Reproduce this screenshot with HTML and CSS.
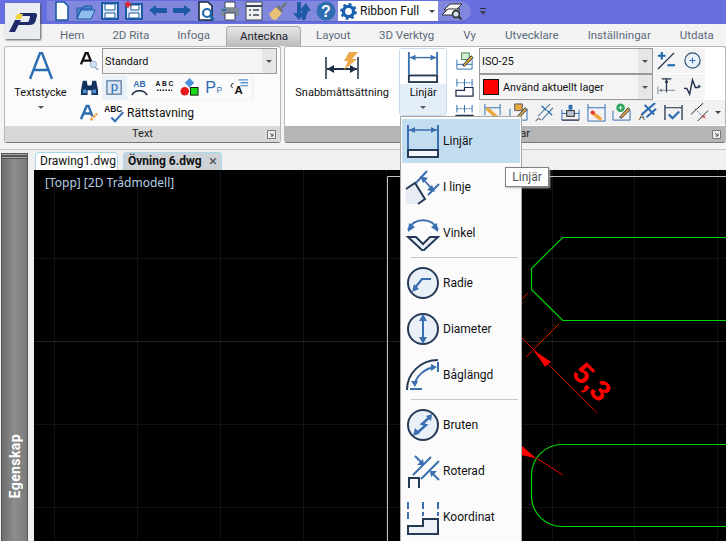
FILE: index.html
```html
<!DOCTYPE html>
<html lang="en">
<head>
    <meta charset="UTF-8">
    <title>Anteckna - Ribbon</title>
    <link rel="stylesheet" href="styles.css">
</head>
<body>
<div class="app">

    <!-- Title bar with quick access -->
    <div class="titlebar">
        <div class="qat">
            <span class="qbtn"><svg viewBox="0 0 20 20"><path d="M4 1h8l4 4v14H4z" fill="#fff" stroke="#1c5aa6" stroke-width="1.6"/></svg></span>
            <span class="qbtn"><svg viewBox="0 0 20 20"><path d="M1 18V7h6l1-2h8v3H5z" fill="#4a86cc" stroke="#1c5aa6"/><path d="M1 18l4-9h14l-4 9z" fill="#8fbdec" stroke="#1c5aa6"/></svg></span>
            <span class="qbtn"><svg viewBox="0 0 20 20"><path d="M2 2h16v16H2z" fill="#dbe8f6" stroke="#1c5aa6" stroke-width="2"/><path d="M5 3h10v6H5zM5 12h10v5H5z" fill="#fff" stroke="#1c5aa6"/></svg></span>
            <span class="qbtn"><svg viewBox="0 0 20 20"><path d="M2 3h16v15H2z" fill="#dbe8f6" stroke="#1c5aa6" stroke-width="2"/><path d="M7 4h8v5H7zM5 12h10v5H5z" fill="#fff" stroke="#1c5aa6"/><path d="M4 0v7M1 2l6 3M7 2L1 5" stroke="#e8222a" stroke-width="1.5"/></svg></span>
            <span class="qbtn"><svg viewBox="0 0 20 20"><path d="M1 9l7-5v3h11v5H8v3z" fill="#1c5aa6"/></svg></span>
            <span class="qbtn"><svg viewBox="0 0 20 20"><path d="M19 9l-7-5v3H1v5h11v3z" fill="#1c5aa6"/></svg></span>
            <span class="qbtn"><svg viewBox="0 0 20 20"><path d="M3 1h9l4 4v14H3z" fill="#fff" stroke="#1a2a44" stroke-width="1.6"/><circle cx="11" cy="12" r="4" fill="#fff" stroke="#1c6ab0" stroke-width="2.2"/><path d="M14 15l4 4" stroke="#1c6ab0" stroke-width="2.6"/></svg></span>
            <span class="qbtn"><svg viewBox="0 0 20 20"><path d="M5 1h10v6H5z" fill="#fff" stroke="#3a4658"/><path d="M1 7h18v8H1z" fill="#7d8a9c"/><path d="M5 12h10v7H5z" fill="#fff" stroke="#3a4658"/><path d="M2 9h4" stroke="#2c6fb8" stroke-width="2"/></svg></span>
            <span class="qbtn"><svg viewBox="0 0 20 20"><path d="M2 1h16v18H2z" fill="#f2f2f2" stroke="#3a4658"/><path d="M2 5h16" stroke="#3a4658" stroke-width="2"/><path d="M5 9h2M5 14h2M9 9h6M9 14h6" stroke="#3a4658" stroke-width="1.6"/></svg></span>
            <span class="qbtn"><svg viewBox="0 0 20 20"><path d="M1 13l7-7 6 6-6 7-4-1z" fill="#e8c078"/><path d="M8 6l3-2 4 4-1 4z" fill="#70757c"/><path d="M13 5l5-4 1 2-4 4z" fill="#70757c"/></svg></span>
            <span class="qbtn"><svg viewBox="0 0 20 20"><path d="M5 1h4v11h4l-6 7-6-7h4z" fill="#1c5aa6"/><path d="M14 19h-3v-9H8l7-8 5 8h-3z" fill="#1c5aa6" transform="translate(-1 0)"/></svg></span>
            <span class="qbtn"><svg viewBox="0 0 20 20"><circle cx="10" cy="10" r="9.5" fill="#2d6db0"/><text x="10" y="15.5" class="help-mark">?</text></svg></span>
            <div class="ws-combo">
                <svg class="gear" viewBox="0 0 20 20"><circle cx="10" cy="10" r="6" fill="none" stroke="#1c62b0" stroke-width="4"/><circle cx="10" cy="10" r="8.4" fill="none" stroke="#1c62b0" stroke-width="3" stroke-dasharray="3.2 3.4"/></svg>
                <span class="ws-name">Ribbon Full</span>
                <span class="caret dark"></span>
            </div>
            <span class="qbtn layers"><svg viewBox="0 0 24 20"><path d="M3 9l6-6h12l-6 6z" fill="#f4f4f4" stroke="#333"/><path d="M1 14l6-6h12l-6 6z" fill="#fff" stroke="#333"/><circle cx="15" cy="13" r="3.4" fill="#cfe0f2" stroke="#333" stroke-width="1.6"/><path d="M17.5 15.5l3 3" stroke="#333" stroke-width="2"/></svg></span>
        </div>
        <span class="qat-more"></span>
    </div>

    <div class="logo">
        <svg viewBox="0 0 35 36">
            <path d="M4 29l6-12h6l-6 12z" fill="#1f2a6b"/>
            <path d="M15 10h14c3 0 3.500 1.500 2.700 4l-1.200 4c-1 3-3 4-6 4H13l1.500-3h7.500c1 0 1.700-.5 2-1.500l1-3c.3-1-.2-1.500-1.300-1.500H15z" fill="#1f2a6b"/>
            <path d="M12 11h6l-2 5h-6z" fill="#f0d838"/>
        </svg>
    </div>

    <!-- Ribbon tabs -->
    <div class="tabs">
        <span class="tab">Hem</span>
        <span class="tab">2D Rita</span>
        <span class="tab">Infoga</span>
        <span class="tab active">Anteckna</span>
        <span class="tab">Layout</span>
        <span class="tab wide">3D Verktyg</span>
        <span class="tab wide">Vy</span>
        <span class="tab wide">Utvecklare</span>
        <span class="tab wide">Inställningar</span>
        <span class="tab wide">Utdata</span>
    </div>

    <!-- Ribbon panels -->
    <div class="ribbon">
        <section class="panel panel-text">
            <div class="panel-body">
                <div class="big-btn text-btn">
                    <svg class="big-a" viewBox="0 0 24 28"><path d="M1 27L11 1h2l10 26M5.500 18h13" fill="none" stroke="#2a6db5" stroke-width="2.400"/></svg>
                    <span class="big-label">Textstycke</span>
                    <span class="caret"></span>
                </div>
                <div class="icon-col">
                    <span class="cell"><svg viewBox="0 0 20 20"><path d="M1 13L6 1h2l5 12M3 9h8" fill="none" stroke="#111" stroke-width="2.400"/><circle cx="14" cy="13" r="3.500" fill="#cfe0f2" stroke="#9bb4d0"/><path d="M16 16l3 3" stroke="#9aa6b4" stroke-width="1.500"/></svg></span>
                    <span class="cell"><svg viewBox="0 0 20 20"><path d="M3 3h4l1 5h4l1-5h4l2 10v5h-7v-5H8v5H1v-5z" fill="#12305c"/><path d="M3 12h4v4H3zM13 12h4v4h-4z" fill="#4f8fd0"/></svg></span>
                    <span class="cell"><svg viewBox="0 0 20 20"><path d="M1 16L7 2h2l4 11M4 10h7" fill="none" stroke="#2f6cb2" stroke-width="2.600"/><path d="M11 17l7-7" stroke="#eda13a" stroke-width="2.600" stroke-dasharray="3 1"/></svg></span>
                </div>
                <div class="stack">
                    <div class="combo combo-text">
                        <span class="combo-value">Standard</span>
                        <span class="combo-arrow"><span class="caret"></span></span>
                    </div>
                    <div class="icon-row row-text">
                        <span class="cell on"><svg viewBox="0 0 20 20"><rect x="2" y="3" width="15" height="14" fill="#d8e6f6" stroke="#34557e"/><text x="10" y="14" class="ico-text blue" font-size="14">p</text></svg></span>
                        <span class="cell"><svg viewBox="0 0 20 20"><text x="10" y="9" class="ico-text blue" font-size="9" font-weight="700">AB</text><path d="M2 18c3-6 13-6 16 0" fill="none" stroke="#1a2a44" stroke-width="1.500"/></svg></span>
                        <span class="cell"><svg viewBox="0 0 20 20"><text x="10" y="8" class="ico-text" font-size="7" font-weight="700">A B C</text><path d="M2 13h16" stroke="#111" stroke-width="1.600" stroke-dasharray="1.600 1.400"/></svg></span>
                        <span class="cell"><svg viewBox="0 0 20 20"><path d="M10 0l5 5-5 5-5-5z" fill="#4f93e0"/><circle cx="5" cy="14" r="4.500" fill="#e8181c"/><rect x="11" y="10" width="8" height="8" fill="#18d818" stroke="#111"/></svg></span>
                        <span class="cell"><svg viewBox="0 0 20 20"><text x="6" y="16" class="ico-text blue" font-size="17">P</text><text x="15" y="16" class="ico-text blue" font-size="9">P</text></svg></span>
                        <span class="cell"><svg viewBox="0 0 20 20"><path d="M9 2h10M11 5h8M11 8h8" stroke="#5b93d2" stroke-width="1.400"/><text x="9" y="17" class="ico-text" font-size="12" font-weight="700">A</text><path d="M4 6H2l-1 3 2 1" fill="none" stroke="#333"/></svg></span>
                    </div>
                    <div class="spell">
                        <svg viewBox="0 0 24 20"><text x="10" y="9" class="ico-text" font-size="9" font-weight="700">ABC</text><path d="M8 15l4 4 9-10" fill="none" stroke="#2f6cb2" stroke-width="2.200"/></svg>
                        <span>Rättstavning</span>
                    </div>
                </div>
            </div>
            <div class="panel-foot">
                <span class="foot-title">Text</span>
                <svg class="launcher" viewBox="0 0 9 9"><path d="M.5.500h8v8h-8z" fill="#eee" stroke="#777"/><path d="M3 3l3 3M6 3.500V6H3.500" fill="none" stroke="#555"/></svg>
            </div>
        </section>

        <section class="panel panel-dim">
            <div class="panel-body">
                <div class="big-btn quick-btn">
                    <svg class="quick-icon" viewBox="0 0 36 30"><path d="M2 6v22M34 6v22" stroke="#1f2f4a" stroke-width="1.500"/><path d="M3 18h30" stroke="#1f2f4a" stroke-width="2"/><path d="M3 18l7-4v8zM33 18l-7-4v8z" fill="#1f2f4a"/><path d="M25 1h9l-6 7h5L20 19l4-9h-4z" fill="#eca94a"/></svg>
                    <span class="big-label">Snabbmåttsättning</span>
                </div>
                <div class="split-btn">
                    <div class="split-top">
                        <svg viewBox="0 0 36 34"><path d="M3 1v24M33 1v24" stroke="#3a6fb0" stroke-width="2"/><path d="M4 7h28" stroke="#3a6fb0" stroke-width="1.500"/><path d="M4 7l6-3v6zM32 7l-6-3v6z" fill="#3a6fb0"/><rect x="3" y="26" width="30" height="7" fill="#fff" stroke="#253a56" stroke-width="2"/></svg>
                    </div>
                    <div class="split-bottom">
                        <span class="big-label">Linjär</span>
                        <span class="caret"></span>
                    </div>
                </div>
                <div class="icon-col dim-col">
                    <span class="cell"><svg viewBox="0 0 20 20"><path d="M2 8v10M18 8v10M2 18h16" stroke="#2f6cb2"/><path d="M2 13h16" stroke="#2f6cb2"/><rect x="7" y="1" width="8" height="7" fill="#d8ecd8" stroke="#3a8a4a"/><path d="M8 14l9-10 2 2-9 9z" fill="#e8a83e" stroke="#234"/></svg></span>
                    <span class="cell"><svg viewBox="0 0 20 20"><path d="M2 1v8M10 1v8M18 1v8" stroke="#2f6cb2"/><path d="M2 5h16" stroke="#2f6cb2" stroke-dasharray="2 1"/><path d="M1 19v-6h9v-3h9v9z" fill="#fff" stroke="#1f2f4a" stroke-width="1.300"/></svg></span>
                    <span class="cell"><svg viewBox="0 0 20 20"><path d="M2 1v8M10 1v8M18 1v8" stroke="#2f6cb2"/><path d="M2 5h16" stroke="#2f6cb2" stroke-dasharray="2 1"/><path d="M1 12h18v6H1z" fill="#fff" stroke="#1f2f4a" stroke-width="1.300"/></svg></span>
                </div>
                <div class="stack dim-stack">
                    <div class="combo-line">
                        <div class="combo combo-dim">
                            <span class="combo-value">ISO-25</span>
                            <span class="combo-arrow"><span class="caret"></span></span>
                        </div>
                        <div class="pair">
                            <span class="cell"><svg viewBox="0 0 20 20"><path d="M1 19L18 2" stroke="#1f2f4a" stroke-width="1.300"/><path d="M1 5h8M5 1v8" stroke="#1f66b0" stroke-width="2.200"/><path d="M11 15h8" stroke="#1f66b0" stroke-width="2.200"/></svg></span>
                            <span class="cell"><svg viewBox="0 0 20 20"><circle cx="10" cy="10" r="8" fill="#eaf1f9" stroke="#34506f" stroke-width="1.300"/><path d="M7 10h6M10 7v6" stroke="#1f66b0"/></svg></span>
                        </div>
                    </div>
                    <div class="combo-line">
                        <div class="combo combo-dim">
                            <span class="swatch"></span>
                            <span class="combo-value">Använd aktuellt lager</span>
                            <span class="combo-arrow"><span class="caret"></span></span>
                        </div>
                        <div class="pair">
                            <span class="cell"><svg viewBox="0 0 20 20"><path d="M1 10v8M19 14H11M4 14h5" stroke="#7a8490"/><path d="M2 14l3-2v4z" fill="#7a8490"/><path d="M5 2h10M10 2v14" stroke="#1f2f4a" stroke-width="1.300"/><path d="M10 2l-2 4h4z" fill="#1f2f4a"/></svg></span>
                            <span class="cell"><svg viewBox="0 0 20 20"><path d="M1 12h3l3 6 3-15 3 8h3" fill="none" stroke="#1f2f4a" stroke-width="1.500"/><path d="M19 10l-3-2v4z" fill="#1f2f4a"/></svg></span>
                        </div>
                    </div>
                    <div class="icon-row row-dim">
                        <span class="cell"><svg viewBox="0 0 20 20"><path d="M2 1v12M18 1v12" stroke="#2f6cb2"/><path d="M2 5h16" stroke="#2f6cb2"/><path d="M5 4l11 10-2 3L3 7z" fill="#e8a83e"/><path d="M1 18h18" stroke="#1f2f4a"/></svg></span>
                        <span class="cell"><svg viewBox="0 0 20 20"><path d="M6 1h8v7H6z" fill="#e8a83e" stroke="#556"/><path d="M1 6v12M19 6v12M1 18h18" stroke="#2f6cb2"/><path d="M8 15l9-10 2 2-9 9z" fill="#e8a83e" stroke="#234"/></svg></span>
                        <span class="cell"><svg viewBox="0 0 20 20"><path d="M3 14L16 1M7 18L19 5" stroke="#5b7d9e" stroke-width="1.200"/><path d="M7 3l5 5M18 13l-5-5" stroke="#2f6cb2" stroke-width="1.500"/><path d="M1 19c1-3 4-3 5-1" fill="none" stroke="#222"/></svg></span>
                        <span class="cell"><svg viewBox="0 0 20 20"><path d="M1 7v11M19 7v11M1 11h18" stroke="#2f6cb2"/><rect x="6" y="8" width="8" height="6" fill="#bcc6d2" stroke="#222"/><rect x="8" y="2" width="4" height="5" fill="#2f6cb2"/><path d="M1 18h18" stroke="#1f2f4a" stroke-width="1.400"/></svg></span>
                        <span class="cell"><svg viewBox="0 0 20 20"><path d="M1 1v18M19 1v18M1 5h18M1 19h18" stroke="#2f6cb2" fill="none"/><path d="M7 9l9 7-2 3-9-7z" fill="#f0a23e"/><circle cx="6" cy="10" r="2.200" fill="#e83030"/></svg></span>
                        <span class="cell"><svg viewBox="0 0 20 20"><circle cx="9" cy="5" r="4.500" fill="#2aa55a"/><path d="M7 5h4M9 3v4" stroke="#fff"/><path d="M1 8v10M19 8v10M1 18h18" stroke="#2f6cb2"/><path d="M8 15l9-10 2 2-9 9z" fill="#e8a83e" stroke="#234"/></svg></span>
                        <span class="cell"><svg viewBox="0 0 20 20"><path d="M4 12L18 0M9 15l10-9" stroke="#2f6cb2" stroke-width="2.200"/><path d="M7 2l10 10" stroke="#2f6cb2" stroke-width="2.200"/><text x="4" y="18" class="ico-text" font-size="9">A</text></svg></span>
                        <span class="cell"><svg viewBox="0 0 20 20"><path d="M1 2v16M19 2v16M1 5h18" stroke="#1f2f4a" stroke-width="1.300"/><path d="M5 12l4 4 7-7" fill="none" stroke="#2f6cb2" stroke-width="2.400"/></svg></span>
                        <span class="cell"><svg viewBox="0 0 20 20"><path d="M1 12L14 0M8 19L19 8" stroke="#222"/><path d="M5 6l8 8" stroke="#2f6cb2" stroke-dasharray="2 1.500"/><path d="M13 13l3 3M16 13l-3 3" stroke="#d8282c"/></svg></span>
                        <span class="row-caret"><span class="caret dark"></span></span>
                    </div>
                </div>
            </div>
            <div class="panel-foot">
                <span class="foot-title">Mätningar</span>
                <svg class="launcher" viewBox="0 0 9 9"><path d="M.5.500h8v8h-8z" fill="#eee" stroke="#777"/><path d="M3 3l3 3M6 3.500V6H3.500" fill="none" stroke="#555"/></svg>
            </div>
        </section>
    </div>

    <div class="ribbon-gap"></div>

    <!-- Sidebar, document tabs, drawing -->
    <div class="workspace">
        <aside class="sidebar">
            <div class="grip"></div>
            <span class="sidebar-label">Egenskap</span>
        </aside>
        <div class="main">
            <div class="doc-tabs">
                <span class="doc-tab">Drawing1.dwg</span>
                <span class="doc-tab current">Övning 6.dwg<span class="doc-close">&times;</span></span>
            </div>
            <svg class="canvas" viewBox="34 170 692 371">
                <g class="grid">
                    <path d="M54.500 170v371M137.500 170v371M220.500 170v371M303.500 170v371M386.500 170v371M469.500 170v371M552.500 170v371M634.500 170v371M717.500 170v371"/>
                    <path d="M34 258.500h692M34 424.500h692M34 507.500h692"/>
                </g>
                <path class="grid-major" d="M34 341.500h692"/>
                <path class="viewport" d="M387.500 541V176.500H726"/>
                <text x="45" y="187" class="view-label">[Topp] [2D Trådmodell]</text>
                <g class="part">
                    <path d="M726 237.500H562.700L531.500 268.500V289.500L562.700 320.500H726"/>
                    <path d="M726 444.500H562.700C545 444.500 531.500 458 531.500 475.500V495.500C531.500 513 545 526.500 562.700 526.500H726"/>
                </g>
                <g class="dim">
                    <path d="M521 300l7-7M559 324l-33 33M521.500 337.300L597 412.700M536 458l27 17"/>
                    <path class="dim-fill" d="M533.300 350L551 361.700 545 366.700zM536 458.300L521 445V455z"/>
                    <text x="592" y="392" class="dim-text" transform="rotate(45 592 382)">5,3</text>
                </g>
            </svg>
        </div>
    </div>

    <!-- Open dimension menu -->
    <div class="menu">
        <div class="menu-item hover">
            <svg viewBox="0 0 36 36"><path d="M3 2v24M33 2v24" stroke="#3a6fb0" stroke-width="2"/><path d="M4 7h28" stroke="#3a6fb0" stroke-width="1.500"/><path d="M4 7l6-3v6zM32 7l-6-3v6z" fill="#3a6fb0"/><rect x="3" y="27" width="30" height="7" fill="#f4f6fa" stroke="#253a56" stroke-width="2"/></svg>
            <span>Linjär</span>
        </div>
        <div class="menu-item">
            <svg viewBox="0 0 36 36"><path d="M11 14L22 2M23 26L34 15" stroke="#3a6fb0" stroke-width="2"/><path d="M17 9l11 12" stroke="#3a6fb0" stroke-width="1.800"/><path d="M15 7l8 2-5 5zM30 23l-8-2 5-5z" fill="#3a6fb0"/><path d="M1 20L10 14 20 30 13 35H1z" fill="#e6ebf4"/><path d="M1 20L10 14 20 30 13 35" fill="none" stroke="#253a56" stroke-width="2"/></svg>
            <span>I linje</span>
        </div>
        <div class="menu-item">
            <svg viewBox="0 0 36 36"><path d="M3 15C9 2 27 2 33 15" fill="none" stroke="#3a6fb0" stroke-width="2"/><path d="M3 17l1-9 6 4zM33 17l-1-9-6 4z" fill="#3a6fb0"/><path d="M3 22h8l7 7 7-7h8L18 36z" fill="#eef1f7" stroke="#253a56" stroke-width="2"/></svg>
            <span>Vinkel</span>
        </div>
        <div class="menu-sep"></div>
        <div class="menu-item">
            <svg viewBox="0 0 36 36"><circle cx="18" cy="18" r="15" fill="#eaf0f8" stroke="#253a56" stroke-width="2"/><path d="M26 14H17L9 24" fill="none" stroke="#3a6fb0" stroke-width="2.200"/><path d="M7 27l2-8 5 5z" fill="#3a6fb0"/></svg>
            <span>Radie</span>
        </div>
        <div class="menu-item">
            <svg viewBox="0 0 36 36"><circle cx="18" cy="18" r="15" fill="#eaf0f8" stroke="#253a56" stroke-width="2"/><path d="M18 5v26" stroke="#3a6fb0" stroke-width="2"/><path d="M18 3l-4 7h8zM18 33l-4-7h8z" fill="#3a6fb0"/></svg>
            <span>Diameter</span>
        </div>
        <div class="menu-item">
            <svg viewBox="0 0 36 36"><path d="M2 33C2 16 16 3 33 3" fill="none" stroke="#253a56" stroke-width="2"/><path d="M33 5v10" stroke="#3a6fb0" stroke-width="2"/><path d="M10 28C10 20 20 11 30 10" fill="none" stroke="#3a6fb0" stroke-width="2"/><path d="M32 10l-6-3v7zM10 30l-4-6h7z" fill="#3a6fb0"/><path d="M5 32h12" stroke="#3a6fb0" stroke-width="2"/></svg>
            <span>Båglängd</span>
        </div>
        <div class="menu-sep"></div>
        <div class="menu-item">
            <svg viewBox="0 0 36 36"><circle cx="18" cy="18" r="15" fill="#eaf0f8" stroke="#253a56" stroke-width="2"/><path d="M26 9l-9 8 4 1-10 9" fill="none" stroke="#3a6fb0" stroke-width="2.400"/><path d="M8 29l2-8 5 5zM27 7l-1 7-5-5z" fill="#3a6fb0"/></svg>
            <span>Bruten</span>
        </div>
        <div class="menu-item">
            <svg viewBox="0 0 36 36"><path d="M8 22L26 4M16 26L34 8" stroke="#3a6fb0" stroke-width="2"/><path d="M10 3l8 8M34 27l-8-8" stroke="#3a6fb0" stroke-width="2"/><path d="M19 12l-7 0 6-6zM25 18l7 0-6 6z" fill="#3a6fb0"/><path d="M4 35V25h10v10" fill="none" stroke="#253a56" stroke-width="2"/></svg>
            <span>Roterad</span>
        </div>
        <div class="menu-item">
            <svg viewBox="0 0 36 36"><path d="M3 3v20M18 3v14M33 3v14" stroke="#3a6fb0" stroke-width="2" stroke-dasharray="7 3"/><path d="M3 35V27h15v-7h15v15z" fill="#eef1f7" stroke="#253a56" stroke-width="2"/></svg>
            <span>Koordinat</span>
        </div>
    </div>
    <div class="tooltip">Linjär</div>

</div>
</body>
</html>
```

FILE: styles.css
```css
body {
    margin: 0;
    font-family: Roboto, sans-serif;
    font-size: 12px;
    color: #111;
}
.app {
    position: relative;
    width: 726px;
    height: 541px;
    overflow: hidden;
    display: flex;
    flex-direction: column;
    background-color: #f2f2f2;
}
svg {
    display: block;
}

/* title bar */
.titlebar {
    flex: 0 0 24px;
    box-sizing: border-box;
    padding: 1px 0 2px 47px;
    display: flex;
    align-items: center;
    background-color: #666ee0;
}
.qat {
    height: 21px;
    width: 424px;
    box-sizing: border-box;
    padding-left: 3px;
    display: flex;
    align-items: center;
    background-color: #8087dc;
    border-bottom: 1px solid #5c64c8;
    border-radius: 0 11px 11px 0;
}
.qbtn {
    width: 24px;
    height: 20px;
    display: flex;
    justify-content: center;
    align-items: center;
}
.qbtn svg {
    width: 20px;
    height: 20px;
}
.qbtn.layers {
    width: 30px;
}
.qbtn.layers svg {
    width: 24px;
}
.help-mark {
    font-family: "Liberation Sans", sans-serif;
    font-size: 16px;
    font-weight: 700;
    fill: #fff;
    text-anchor: middle;
}
.ws-combo {
    width: 100px;
    height: 20px;
    box-sizing: border-box;
    padding: 0 3px 0 2px;
    display: flex;
    align-items: center;
    background-color: #fff;
}
.gear {
    width: 17px;
    height: 17px;
}
.ws-name {
    margin-left: 3px;
    flex: 1;
}
.qat-more {
    margin-left: 9px;
    width: 6px;
    height: 7px;
    border-top: 1px solid #333;
    box-sizing: border-box;
    position: relative;
}
.qat-more::after {
    content: "";
    position: absolute;
    top: 2px;
    left: 0;
    border-left: 3px solid transparent;
    border-right: 3px solid transparent;
    border-top: 4px solid #444;
}
.caret {
    display: inline-block;
    width: 0;
    height: 0;
    border-left: 3.5px solid transparent;
    border-right: 3.5px solid transparent;
    border-top: 3.5px solid #555;
}
.caret.dark {
    border-top-color: #444;
}

/* logo over title bar and tabs */
.logo {
    position: absolute;
    left: 5px;
    top: 3px;
    width: 35px;
    height: 36px;
    background-color: #e9edf1;
    box-shadow: 1px 1px 2px #555;
}

/* ribbon tabs */
.tabs {
    flex: 0 0 22px;
    box-sizing: border-box;
    padding: 2px 0 0 46px;
    display: flex;
    background-color: #f3f3f3;
    font-size: 11.5px;
}
.tab {
    padding: 0 14px;
    line-height: 18px;
    color: #5c6a7c;
    white-space: nowrap;
}
.tab.wide {
    padding: 0 14.5px;
}
.tab.active {
    padding: 0 12px 0 13px;
    margin: 0 1px 0 2px;
    border: 1px solid #aaa;
    border-bottom: none;
    border-radius: 4px 4px 0 0;
    color: #1c2430;
    background: linear-gradient(#e6e6e6, #bdbdbd);
}

/* ribbon panels */
.ribbon {
    flex: 0 0 97px;
    box-sizing: border-box;
    padding-left: 4px;
    display: flex;
    gap: 3px;
    background-color: #f3f3f3;
    overflow: hidden;
}
.panel {
    box-sizing: border-box;
    display: flex;
    flex-direction: column;
    border: 1px solid #b8b8b8;
    border-bottom-color: #777;
    border-radius: 3px;
    background-color: #fbfbfb;
}
.panel-text {
    width: 277px;
}
.panel-dim {
    width: 442px;
    flex: none;
    background-color: #fff;
}
.panel-body {
    flex: 1;
    display: flex;
    min-height: 0;
}
.panel-foot {
    flex: 0 0 16px;
    position: relative;
    display: flex;
    justify-content: center;
    align-items: center;
    background-color: #d8d8d8;
    color: #222;
}
.panel-dim .panel-foot {
    background-color: #b5b5b5;
}
.foot-title {
    line-height: 16px;
    font-size: 11px;
}
.launcher {
    position: absolute;
    right: 4px;
    top: 4px;
    width: 9px;
    height: 9px;
}

.big-btn {
    display: flex;
    flex-direction: column;
    align-items: center;
}
.big-label {
    white-space: nowrap;
    line-height: 16px;
    font-size: 11px;
}
.text-btn {
    width: 71px;
    padding-top: 5px;
}
.big-a {
    width: 24px;
    height: 28px;
    margin-bottom: 5px;
}
.text-btn .caret {
    margin-top: 5px;
}
.quick-btn {
    width: 115px;
    padding-top: 4px;
}
.quick-icon {
    width: 36px;
    height: 30px;
    margin-bottom: 4px;
}

.icon-col {
    width: 26px;
    padding-top: 1px;
    display: flex;
    flex-direction: column;
}
.icon-col .cell {
    height: 26px;
}
.cell {
    width: 26px;
    height: 24px;
    display: flex;
    justify-content: center;
    align-items: center;
}
.cell svg {
    width: 19px;
    height: 19px;
}
.ico-text {
    font-family: "Liberation Sans", sans-serif;
    text-anchor: middle;
    fill: #111;
}
.ico-text.blue {
    fill: #2f6cb2;
}

.stack {
    padding-top: 1px;
    display: flex;
    flex-direction: column;
}
.combo {
    box-sizing: border-box;
    height: 26px;
    display: flex;
    align-items: center;
    border: 1px solid #9a9a9a;
    background-color: #f4f4f4;
    font-size: 10.8px;
}
.combo-text {
    width: 175px;
}
.combo-value {
    flex: 1;
    padding-left: 2px;
    white-space: nowrap;
}
.combo-arrow {
    flex: 0 0 14px;
    align-self: stretch;
    display: flex;
    justify-content: center;
    align-items: center;
    background-color: #e6e6e6;
}
.icon-row {
    display: flex;
    align-items: center;
    box-sizing: border-box;
    background-color: #f2f2f2;
    border-radius: 3px;
}
.row-text {
    width: 152px;
    height: 25px;
    margin-top: 1px;
}
.row-text .cell {
    width: 25px;
    height: 23px;
    background-color: #fafafa;
}
.row-text .cell.on {
    background-color: #e8f0f8;
}
.spell {
    height: 26px;
    padding-left: 2px;
    display: flex;
    align-items: center;
    gap: 1px;
}
.spell svg {
    width: 22px;
    height: 20px;
}

.split-btn {
    width: 48px;
    height: 68px;
    margin-top: 1px;
    box-sizing: border-box;
    display: flex;
    flex-direction: column;
    border: 1px solid #c8daec;
    border-radius: 3px;
}
.split-top {
    flex: 0 0 35px;
    display: flex;
    justify-content: center;
    align-items: center;
    background-color: #fff;
}
.split-top svg {
    width: 34px;
    height: 32px;
}
.split-bottom {
    flex: 1;
    padding-top: 1px;
    display: flex;
    flex-direction: column;
    align-items: center;
    background-color: #e4eef8;
}
.split-bottom .caret {
    margin-top: 5px;
}
.dim-col {
    margin-left: 4px;
    width: 26px;
}
.dim-stack {
    margin-left: 2px;
    width: 246px;
    flex: none;
}
.combo-line {
    display: flex;
    height: 26px;
}
.combo-dim {
    width: 174px;
    height: 26px;
}
.pair {
    display: flex;
    background-color: #f4f4f4;
    border-radius: 2px;
    height: 25px;
}
.swatch {
    width: 14px;
    height: 14px;
    margin-left: 3px;
    border: 1px solid #111;
    background-color: #f00;
}
.combo-dim .swatch + .combo-value {
    padding-left: 4px;
}
.row-dim {
    width: 246px;
    height: 25px;
    border: 1px solid #ececec;
}
.row-caret {
    width: 12px;
    display: flex;
    justify-content: center;
}

.ribbon-gap {
    flex: 0 0 7px;
    background-color: #f3f3f3;
    border-bottom: 1px solid #c8c8c8;
    box-sizing: border-box;
}

/* workspace */
.workspace {
    flex: 1;
    min-height: 0;
    display: flex;
    background-color: #f0f0f0;
}
.sidebar {
    flex: 0 0 27px;
    margin: 3px 6px 0 1px;
    display: flex;
    flex-direction: column;
    justify-content: flex-end;
    align-items: center;
    border-left: 1px solid #555;
    border-right: 1px solid #555;
    box-sizing: border-box;
    background: linear-gradient(90deg, #6c6c6c, #8e8e8e 50%, #7a7a7a);
    position: relative;
}
.grip {
    position: absolute;
    top: 0;
    left: 0;
    right: 0;
    height: 6px;
    background-color: #555;
    background-image: radial-gradient(#aaa 0.6px, transparent 0.8px);
    background-size: 2px 3px;
}
.sidebar-label {
    margin-bottom: 43px;
    writing-mode: vertical-rl;
    transform: rotate(180deg);
    color: #fff;
    font-size: 14px;
    letter-spacing: 0.4px;
    font-weight: 700;
}
.main {
    flex: 1;
    min-width: 0;
    display: flex;
    flex-direction: column;
}
.doc-tabs {
    flex: 0 0 20px;
    box-sizing: border-box;
    padding: 2px 0 0 1px;
    display: flex;
    gap: 5px;
}
.doc-tab {
    box-sizing: border-box;
    height: 18px;
    width: 83px;
    display: flex;
    justify-content: space-between;
    border: 1px solid #a8d8ee;
    border-bottom: none;
    border-radius: 4px 4px 0 0;
    padding: 0 4px;
    background-color: #fff;
    line-height: 17px;
    white-space: nowrap;
}
.doc-tab.current {
    width: 99px;
    background-color: #ccd2d6;
    font-weight: 700;
}
.doc-close {
    color: #555;
    font-weight: 400;
    font-size: 15px;
}
.canvas {
    width: 692px;
    height: 371px;
    background-color: #000;
}
.grid path {
    stroke: #101218;
    fill: none;
}
.grid-major {
    stroke: #1f2128;
    fill: none;
}
.viewport {
    stroke: #c0c0c0;
    fill: none;
}
.view-label {
    font-family: "Noto Sans", sans-serif;
    font-size: 12px;
    fill: #b6cfe6;
}
.part path {
    stroke: #00d800;
    stroke-width: 1.200;
    fill: none;
}
.dim path {
    stroke: #e80000;
    fill: none;
}
.dim .dim-fill {
    stroke: none;
    fill: #f00;
}
.dim-text {
    font-family: "Liberation Sans", sans-serif;
    font-size: 29px;
    font-weight: 700;
    fill: #f00;
    text-anchor: middle;
}

/* dropdown over the drawing */
.menu {
    position: absolute;
    left: 400px;
    top: 116px;
    width: 122px;
    height: 440px;
    box-sizing: border-box;
    padding: 2px 1px;
    border: 1px solid #a8a8a8;
    background-color: #fbfbfb;
}
.menu-item {
    height: 46px;
    box-sizing: border-box;
    padding-left: 3px;
    display: flex;
    align-items: center;
    gap: 2px;
}
.menu-item svg {
    width: 36px;
    height: 36px;
    flex: none;
}
.menu-item.hover {
    height: 44px;
    margin-bottom: 1px;
    background-color: #c2dcf0;
}
.menu-sep {
    height: 1px;
    margin: 1px 2px 2px 9px;
    background-color: #c8c8c8;
}
.tooltip {
    position: absolute;
    left: 505px;
    top: 167px;
    box-sizing: border-box;
    width: 44px;
    height: 20px;
    border: 1px solid #808080;
    background-color: #fff;
    color: #555;
    line-height: 18px;
    text-align: center;
    box-shadow: 1px 1px 2px #bbb;
}
```
